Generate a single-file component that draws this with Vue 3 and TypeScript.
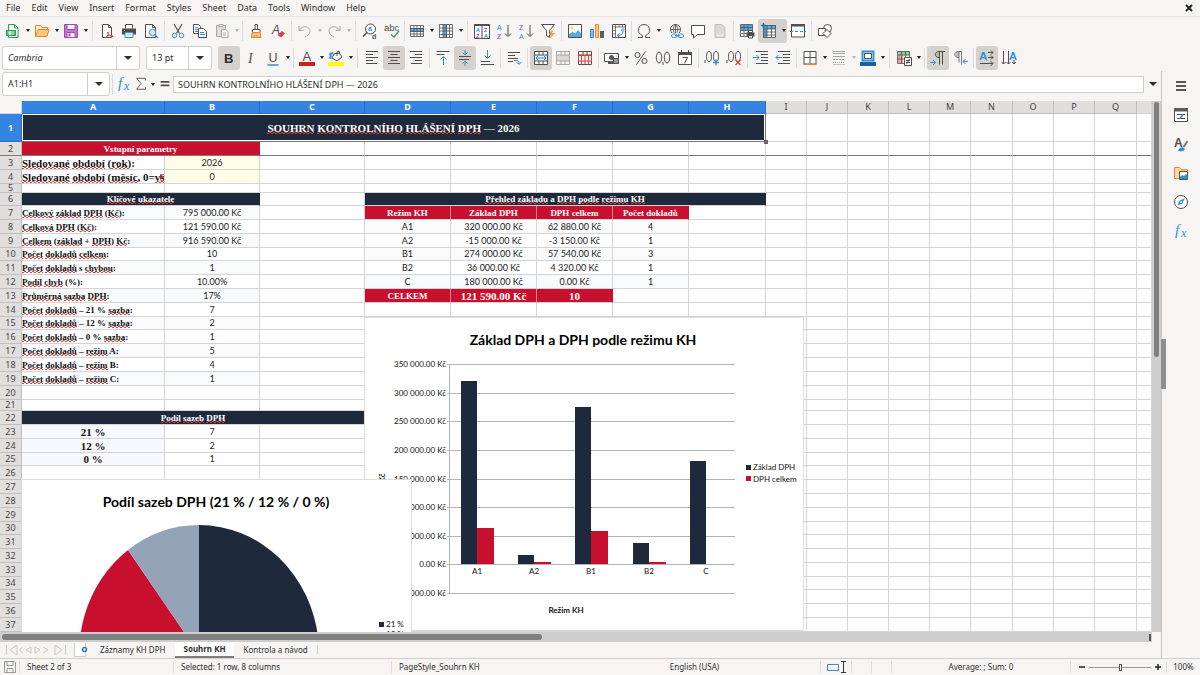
<script setup lang="ts">
import { ref } from 'vue'

interface ToolItem {
  icon?: string
  label?: string
  arrow?: boolean
  active?: boolean
  dim?: boolean
  sep?: 's3' | 's5' | 's7' | 'gap'
}

interface Cell {
  text?: string
  cls?: string
  span?: number
}

const menus = ['File', 'Edit', 'View', 'Insert', 'Format', 'Styles', 'Sheet', 'Data', 'Tools', 'Window', 'Help']

const G = '#4f4f4d'
const B = '#2f8fd8'
const O = '#e8862e'
const R = '#e23d3d'
const P = '#a646b8'
const L = '#a8a8a5'

const line = (d: string, c = G, w = 1) => `<path d="${d}" fill="none" stroke="${c}" stroke-width="${w}"/>`
const fill = (d: string, c = G) => `<path d="${d}" fill="${c}"/>`
const glyph = (t: string, x: number, y: number, s: number, c = G, extra = '') =>
  `<text x="${x}" y="${y}" font-size="${s}" fill="${c}" font-family="Liberation Sans, sans-serif" ${extra}>${t}</text>`
const grid = (c = G) => line('M1.5 2.5h13v11h-13zM1.5 5.5h13M1.5 8.5h13M1.5 11h13M5 2.5v11M8 2.5v11M11.5 2.5v11', c, 0.8)

const icons: Record<string, string> = {
  new: `<path d="M3.500 1.500h6l3.500 3.500v9.500h-9.500z" fill="#fff" stroke="#2f9e57"/>` + line('M9.500 1.500v3.500h3.500', '#2f9e57') + fill('M1 7h10v6h-10z', '#2f9e57') + line('M2.500 9h7M2.500 11h7M5 8v4', '#fff'),
  open: `<path d="M1.500 13.500v-11h5l1.500 2h5.500v2" fill="#fcebd0" stroke="${O}"/><path d="M1.500 13.500l2.500-7h11l-2 7z" fill="#fbc978" stroke="${O}"/>`,
  save: `<path d="M1.500 1.500h12l1 1v12h-13z" fill="#c07bd0" stroke="${P}"/><path d="M4 1.500h8v5h-8zM4 9.500h8v5h-8z" fill="#fff" stroke="${P}"/>` + fill('M5.500 10.500h2v3h-2z', P),
  pdf: `<path d="M3.500 1.500h6l3 3v10h-9z" fill="#fff" stroke="${G}"/>` + line('M9.500 1.500v3h3') + line('M7 15c2-2 3-6 2-6s0 4 5.500 4.500M7 14c2-2 5-2 7-1', R),
  print: `<path d="M4.500 5.500v-4h7v4" fill="#fff" stroke="${G}"/>` + fill('M1 5.500h14v6h-14z', '#4c4c4a') + `<path d="M4 9.500h8v5h-8z" fill="#fff" stroke="${B}"/>` + line('M5.500 11.500h5M3 7.500h1', '#9cc9ea'),
  preview: `<path d="M2.500 1.500h7l3 3v10h-10z" fill="#fff" stroke="${G}"/>` + line('M9.500 1.500v3h3') + `<circle cx="9.500" cy="9.500" r="3.200" fill="#d5eafa" stroke="${B}"/>` + line('M12 12l3 3', B, 1.500),
  cut: line('M4 1l5.500 9.500M12 1l-5.500 9.500', G, 1.200) + `<circle cx="4.500" cy="12.500" r="2.200" fill="none" stroke="${B}"/><circle cx="11.500" cy="12.500" r="2.200" fill="none" stroke="${B}"/>`,
  copy: `<path d="M1.500 1.500h5l2 2v7h-7z" fill="#fff" stroke="${G}"/><path d="M6.500 5.500h5l3 3v6h-8z" fill="#fff" stroke="${G}"/>` + line('M3 4.500h3M3 6.500h3M3 8.500h3M8 9.500h4M8 11.500h5', B),
  paste: `<path d="M2.500 2.500h9v11h-9z" fill="#dededb" stroke="${L}"/><path d="M5 1.500h4v2h-4z" fill="#fff" stroke="${L}"/><path d="M7.500 6.500h4l2.500 2v6h-6.500z" fill="#fff" stroke="${L}"/>` + line('M9 10h3M9 12h3', L),
  clone: line('M7 7v-5.500h2.500v5.500') + `<path d="M4.500 6.500h7.500v3h-7.500z" fill="#fff" stroke="${G}"/><path d="M4.500 9.500h7.500l1 5h-10z" fill="#fbc978" stroke="${O}"/>` + line('M6 14v-2M9 14v-2', O),
  clear: glyph('A', 2, 11, 12, G, 'font-style="italic"') + `<path d="M7.500 12l4.500-4 3 2.500-4 4z" fill="${R}"/>`,
  undo: line('M2 3v4.500h4.500M2.500 7c3-5 11-4 10.500 1.500c-.5 3-3 4.500-5 5.500', L),
  redo: line('M14 3v4.500h-4.500M13.500 7c-3-5-11-4-10.500 1.500c.5 3 3 4.500 5 5.500', L),
  find: `<circle cx="8.500" cy="6" r="5" fill="#fff" stroke="${G}"/>` + line('M5 9.500l-4 4', G, 1.600) + glyph('a', 6, 8, 7, B, 'font-weight="700"') + glyph('d', 10, 15.500, 7, G, 'font-weight="700"'),
  spell: glyph('abc', 0, 8, 9.500) + line('M7 11.500l3 2.500 5-6', '#2f9e57', 1.300),
  rows: `<path d="M1.500 2.500h13v11h-13z" fill="#fff"/>` + fill('M1 5h14v4h-14z', '#55a8e2') + grid(),
  cols: `<path d="M1.500 1.500h13v13h-13z" fill="#fff"/><path d="M5 1.500h4v13h-4z" fill="#55a8e2"/>` + line('M1.500 1.500h13v13h-13zM1.500 5h13M1.500 8h13M1.500 11.500h13M5 1.500v13M8.500 1.500v13M11.500 1.500v13', G, 0.8),
  sort: `<path d="M.5 1.500h15v14h-15zM8 1.500v14" fill="#fff" stroke="${G}"/>` + fill('M.5 1h15v2h-15z') + glyph('A', 2, 8.500, 5.500, B, 'font-weight="700"') + glyph('Z', 2, 14.800, 5.500, P, 'font-weight="700"') + glyph('Z', 10, 8.500, 5.500, P, 'font-weight="700"') + glyph('A', 10, 14.800, 5.500, B, 'font-weight="700"'),
  asc: glyph('A', 1, 7, 7, B) + glyph('Z', 1, 15.500, 7, P) + line('M12 2v11M9 10.500l3 3 3-3'),
  desc: glyph('Z', 1, 7, 7, P) + glyph('A', 1, 15.500, 7, B) + line('M12 2v11M9 10.500l3 3 3-3'),
  filter: `<path d="M1.500 1.500h13l-5 6v7l-3-2v-5z" fill="#fff" stroke="${G}"/>` + fill('M12 7l-3.500 5h2.500l-1.500 4 5.500-6h-3l1.500-3z', '#f39a3c'),
  image: `<path d="M1.500 1.500h13v13h-13z" fill="#fff" stroke="${G}"/><circle cx="5" cy="5" r="1.500" fill="#fbc978"/>` + fill('M2 14v-2.500l3.500-3 2.500 2 3-3.500 3 3.500v3.500z', '#55a8e2'),
  chart: `<path d="M1.500 6.500h3v8h-3z" fill="#7cc0f0" stroke="${B}"/><path d="M6.500 1.500h3v13h-3z" fill="#fbc978" stroke="${O}"/>` + fill('M11 8h4v7h-4z', '#5c5c5a'),
  pivot: `<path d="M1.500 1.500h13v13h-13z" fill="#fff" stroke="${G}"/>` + line('M1.500 4h13M4.500 1.500v13M8 1.500v2.500M11.500 1.500v2.500M1.500 7.500h3M1.500 11h3', '#777') + line('M6.500 12.500c4 0 6-2 5.500-6M10 8l2-2.500 2 2M8.500 10.500l-2.500 2 2.500 1.500', B),
  omega: line('M2 14.500h4.500v-2c-3.500-1.500-4.500-4-4-6.500c.5-3 3-4.500 5.500-4.500s5 1.500 5.500 4.500c.5 2.500-.5 5-4 6.500v2h4.500'),
  link: `<circle cx="7.500" cy="6.500" r="5" fill="none" stroke="${G}"/>` + line('M2.500 6.500h10M7.500 1.500v10M7.500 1.500c-3 3-3 7 0 10M7.500 1.500c3 3 3 7 0 10', G, 0.8) + `<path d="M4 10h11v5h-11z" fill="#f6f5f4"/><rect x="3.500" y="11" width="5.500" height="3.500" rx="1.700" fill="none" stroke="${B}"/><rect x="10" y="11" width="5.500" height="3.500" rx="1.700" fill="none" stroke="${B}"/>` + line('M7 12.700h5', B),
  comment: `<path d="M1.500 2.500h13v9h-7l-4 3.500v-3.500h-2z" fill="#fff" stroke="${G}"/>`,
  header: `<path d="M3 1.500h7l3 3v10h-10z" fill="#d9d9d6" stroke="#bcbcb9"/>` + line('M4.500 12.500h7', '#f3f3f0'),
  parea: `<path d="M1.500 1.500h12v12h-12z" fill="#fff"/>` + fill('M1.500 1.500h12v6h-12z', '#55a8e2') + line('M1.500 1.500h12v12h-12zM1.500 4.500h12M1.500 7.500h12M1.500 10.500h12M5 1.500v12M9 1.500v12', G, 0.8) + `<path d="M7.500 9.500h8v4h-8z" fill="#4c4c4a"/><path d="M9.500 7.500h4v2h-4zM9.500 12.500h4v2.500h-4z" fill="#fff" stroke="${G}"/>`,
  freeze: `<path d="M2.500 2.500h12v12h-12z" fill="#fff"/>` + fill('M2 2h13v4h-13zM2 2h4v13h-4z', '#55a8e2') + line('M2.500 2.500h12v12h-12zM2.500 6h12M2.500 9h12M2.500 12h12M6 2.500v12M10.500 2.500v12', G, 0.8) + line('M0 2.500h5M2.500 0v5', '#0f6fb8', 1.400),
  split: `<path d="M1.500 2.500h13v11.500h-13z" fill="#fff" stroke="${G}"/>` + fill('M1 1h14v2.500h-14z') + line('M0 8.500h3M5 8.500h3M10 8.500h3M15 8.500h1', B),
  shapes: `<circle cx="10.500" cy="5.500" r="4" fill="#fff" stroke="${G}"/><path d="M1.500 5.500h7v7h-7z" fill="#fff" stroke="${G}"/><path d="M10 6.500l4 4-4 4-4-4z" fill="#fff" stroke="${G}"/>`,
  bold: glyph('B', 3, 13, 13, '#2e2e2c', 'font-weight="700"'),
  italic: `<text x="5" y="13" font-size="14" font-style="italic" fill="${G}" font-family="Liberation Serif, serif">I</text>`,
  underline: glyph('U', 3.500, 12, 12.500) + line('M2.500 15h11', B, 1.500),
  fcolor: glyph('A', 3.500, 11, 13) + fill('M0 12h16v4h-16z', '#c9211e'),
  hilite: `<path d="M6 4l5-1 3 4-5 4-5-3z" fill="#fff" stroke="${G}"/>` + line('M2.500 9v-5.500h3', B, 2) + line('M9 6v-4l2-1 1 3') + fill('M0 12h16v4h-16z', '#ffff00'),
  left: line('M2 1.500h12M2 4.500h7M2 7.500h12M2 10.500h7M2 13.500h11'),
  center: line('M2 1.500h12M4.500 4.500h7M2 7.500h12M4.500 10.500h7M2 13.500h12'),
  right: line('M2 1.500h12M7 4.500h7M2 7.500h12M7 10.500h7M3 13.500h11'),
  vtop: line('M1.500 1.500h13M1.500 4.500h8') + line('M8.500 15v-8M5.500 9.500l3-3 3 3', B),
  vmid: line('M2 6.500h12M2 9.500h10') + line('M8 0v4.500M5.500 2.500l2.500 2.500 2.500-2.500M8 16v-4.500M5.500 13.500l2.500-2.500 2.500 2.500', B),
  vbot: line('M2 11.500h9M2 14.500h13') + line('M8.500 0v8M5.500 5.500l3 3 3-3', B),
  wrap: line('M2 2.500h12M2 5.500h7M2 8.500h10M2 11.500h5') + line('M8 10.500h3c1.500 0 2 1 2 3.500M10.500 12l2.500 2.500 2.500-2.500', B),
  merge: `<path d="M1.500 1.500h13v13h-13z" fill="#fff"/><path d="M1.500 5.500h13v5h-13z" fill="#e6f3fc"/>` + line('M1.500 1.500h13v13h-13zM1.500 5h13M1.500 11h13M6 1.500v3.500M10 1.500v3.500M6 11v3.500M10 11v3.500') + line('M3 8h10M5 6l-2 2 2 2M11 6l2 2-2 2', B),
  center2: fill('M2 5h12v6h-12z', '#d9d9d6') + line('M1.500 1.500h13v13h-13zM1.500 5h13M1.500 11h13M6 1.500v3.500M10 1.500v3.500M6 11v3.500M10 11v3.500', L),
  unmerge: line('M1.500 1.500h13v13h-13zM1.500 5h13M6 1.500v3.500M10 1.500v3.500') + line('M1.500 5.500h13v5.500h-13zM4.500 5.500v9M8 5.500v9M11.500 5.500v9', R),
  money: `<path d="M.5 3.500h14v8h-14z" fill="#fff" stroke="${G}"/><circle cx="7.500" cy="7.500" r="2.500" fill="#555"/>` + fill('M9 8h6v6h-6zM4 11h5v3h-5z', '#555') + line('M10 10h4M10 12h4', '#ddd'),
  percent: `<circle cx="4.500" cy="5" r="2.500" fill="none" stroke="${G}"/><circle cx="11.500" cy="11" r="2.500" fill="none" stroke="${G}"/>` + line('M12.500 1.500l-9 13'),
  number: `<ellipse cx="4" cy="7.500" rx="2.700" ry="5.500" fill="none" stroke="${G}"/><ellipse cx="12" cy="7.500" rx="2.700" ry="5.500" fill="none" stroke="${G}"/>` + line('M8 12v3'),
  date: `<path d="M1.500 2.500h13v12h-13z" fill="#fff" stroke="${G}"/>` + fill('M1 2h14v3h-14z') + line('M4.500 0v4M11.500 0v4') + line('M5.500 7.500h5l-3 6'),
  adddec: `<ellipse cx="5" cy="6.500" rx="2.500" ry="5" fill="none" stroke="${G}"/><ellipse cx="12" cy="6.500" rx="2.500" ry="5" fill="none" stroke="${G}"/>` + line('M1 10v3') + line('M9 12.500h6M12 9.500v6', B, 1.300),
  deldec: `<ellipse cx="5" cy="6.500" rx="2.500" ry="5" fill="none" stroke="${G}"/><ellipse cx="12" cy="6.500" rx="2.500" ry="5" fill="none" stroke="${G}"/>` + line('M1 10v3') + line('M9.500 10l5 5M14.500 10l-5 5', R, 1.200),
  indent: line('M3 1.500h12M8 4.500h7M8 7.500h7M8 10.500h7M3 13.500h12') + line('M0 7.500h6M3.500 5l2.500 2.500-2.500 2.500', B),
  outdent: line('M3 1.500h12M8 4.500h7M8 7.500h7M8 10.500h7M3 13.500h12') + line('M1 7.500h6M3.500 5l-2.500 2.500 2.500 2.500', B),
  borders: `<path d="M2 1.500h12v12.500h-12z" fill="#fff" stroke="${G}"/>` + line('M8 1.500v12M2 7.500h12') + line('M1.500 14.500h13', O),
  bstyle: line('M2 1.500h12M2 3.500h12', L) + line('M2 6.500h12', L) + `<path d="M2 9.500h12" stroke="${L}" stroke-dasharray="2 1"/><path d="M2 12.500h12" stroke="${L}" stroke-dasharray="1 1"/>` + line('M2 14.500h12', '#c6c6c3'),
  bcolor: `<path d="M2.500 1.500h11v9h-11z" fill="#fff" stroke="${B}" stroke-width="2"/>` + line('M4.500 3.500h7v5h-7z') + fill('M0 12h16v4h-16z', '#1f5f9e'),
  cond: fill('M2 1h12v4h-12z', '#8fd19e') + fill('M2 5h5v8h-5z', '#f3a09d') + line('M1.500 1.500h12v12h-12zM1.500 5h12M1.500 9h12M5.500 1.500v12M9.500 1.500v12', G, 0.8) + `<path d="M8.500 7.500h7v8h-7z" fill="#fff" stroke="${G}"/>` + line('M10 10.500h4M10 12.500h4M13.500 9l-3 5'),
  ltr: fill('M9 1c-5 0-5 7 0 7z', '#bdbab6') + line('M15 1.500h-6c-5 0-5 6 0 6M9.500 1.500v13M12.500 1.500v13') + line('M0 12.500h5.500M3 10l2.500 2.500-2.500 2.500', B),
  rtl: fill('M7 1c-5 0-5 7 0 7z', '#bdbab6') + line('M9.500 1.500h-3c-5 0-5 6 0 6M7 1.500v11M9.500 1.500v13', '#777') + line('M16 11.500h-5M13.500 9l-2.500 2.500 2.500 2.500', B),
  dirh: glyph('A', 0, 10, 11.500, B, 'font-weight="700"') + line('M9 2.500h5M12 .5l2 2-2 2M9 7.500h5M12 5.500l2 2-2 2M1 13.500h13M11.500 11l2.500 2.500-2.500 2.500'),
  dirv: glyph('A', 8, 10, 11, B, 'font-weight="700"') + line('M2.500 1v13M.5 12l2 2 2-2M7.500 1v13M5.500 12l2 2 2-2M13 10v4M11 12l2 2 2-2'),
  fx: `<text x="2" y="12" font-size="15" font-style="italic" fill="${B}" font-family="Liberation Serif, serif">f</text><text x="8" y="14" font-size="12" font-style="italic" fill="${B}" font-family="Liberation Serif, serif">x</text>`,
  sum: line('M13 4v-2.500h-10l5 6-5 6.500h10v-2.500'),
  equals: line('M3 5.500h10M3 9.500h10', G, 2),
  menu: line('M3 4h10M3 8h10M3 12h10', '#222', 1.500),
  props: `<path d="M1.500 1.500h13v13h-13z" fill="#fff" stroke="${G}"/>` + fill('M1 1h14v3.500h-14z', '#5c5c5a') + line('M4 7.500h8M4 11.500h8') + line('M7 11.500l3-4', B, 1.500),
  styles: glyph('A', 1, 11, 12, G, 'font-weight="700"') + line('M14.500 5l-4 6', '#777', 2) + fill('M5 15c1-3 4-5 6-3s-1 4-6 3z', B),
  gallery: `<path d="M1.500 13.500v-11h5l1.500 2h6.500v9z" fill="#fbd9a6" stroke="${O}"/><path d="M6.500 6.500h8v8h-8z" fill="#fff" stroke="${G}"/>` + fill('M7 14v-2l2-2 2 1 2-2 1.500 2v3z', B),
  navigator: `<circle cx="8" cy="8" r="6.500" fill="#fff" stroke="${G}"/>` + fill('M11.500 4.500l-2 5-5 2 2-5z', B) + `<circle cx="8" cy="8" r="1" fill="#fff"/>`,
}

const s = (sep: ToolItem['sep']): ToolItem => ({ sep })
const i = (icon: string, label: string, arrow = false, active = false, dim = false): ToolItem => ({ icon, label, arrow, active, dim })

const standardBar: ToolItem[] = [
  i('new', 'New', true), i('open', 'Open', true), i('save', 'Save', true), s('s7'),
  i('pdf', 'Export as PDF'), i('print', 'Print'), i('preview', 'Print Preview'), s('s5'),
  i('cut', 'Cut'), i('copy', 'Copy'), i('paste', 'Paste', true, false, true), s('s5'),
  i('clone', 'Clone Formatting'), i('clear', 'Clear Formatting'), s('s5'),
  i('undo', 'Undo', true, false, true), i('redo', 'Redo', true, false, true), s('s7'),
  i('find', 'Find and Replace'), i('spell', 'Spelling'), s('s3'),
  i('rows', 'Row', true), i('cols', 'Column', true), s('s7'),
  i('sort', 'Sort'), i('asc', 'Sort Ascending'), i('desc', 'Sort Descending'), i('filter', 'AutoFilter'), s('s5'),
  i('image', 'Insert Image'), i('chart', 'Insert Chart'), i('pivot', 'Pivot Table'), s('s3'),
  i('omega', 'Special Character', true), s('gap'), i('link', 'Hyperlink'), i('comment', 'Comment'), i('header', 'Headers and Footers'), s('s5'),
  i('parea', 'Define Print Area'), i('freeze', 'Freeze Rows and Columns', true, true), i('split', 'Split Window'), s('s5'),
  i('shapes', 'Draw Functions'),
]

const formatBar: ToolItem[] = [
  i('bold', 'Bold', false, true), i('italic', 'Italic'), i('underline', 'Underline', true), s('s5'),
  i('fcolor', 'Font Color', true), i('hilite', 'Background Color', true), s('s7'),
  i('left', 'Align Left'), i('center', 'Center', false, true), i('right', 'Align Right'), s('s5'),
  i('vtop', 'Align Top'), i('vmid', 'Center Vertically', false, true), i('vbot', 'Align Bottom'), s('s5'),
  i('wrap', 'Wrap Text'), s('s5'),
  i('merge', 'Merge and Center', false, true), i('center2', 'Merge Cells'), i('unmerge', 'Unmerge Cells'), s('s5'),
  i('money', 'Currency', true), i('percent', 'Percent'), i('number', 'Number'), i('date', 'Date'), s('s5'),
  i('adddec', 'Add Decimal Place'), i('deldec', 'Delete Decimal Place'), s('s5'),
  i('indent', 'Increase Indent'), i('outdent', 'Decrease Indent'), s('s5'),
  i('borders', 'Borders', true), i('bstyle', 'Border Style', true, false, true), i('bcolor', 'Border Color', true), s('s7'),
  i('cond', 'Conditional', true), s('s5'),
  i('ltr', 'Left-To-Right', false, true), i('rtl', 'Right-To-Left'), s('s5'),
  i('dirh', 'Text direction left to right', false, true), i('dirv', 'Text direction top to bottom'),
]

const sideBar = [
  i('menu', 'Sidebar Settings'), i('props', 'Properties'), i('styles', 'Styles'),
  i('gallery', 'Gallery'), i('navigator', 'Navigator'), i('fx', 'Functions'),
]

const letters = 'ABCDEFGHIJKLMNOPQ'.split('')
const colWidths = [143, 95, 105, 86, 86, 76, 76, 77, 41, 41, 41, 41, 41, 42, 41, 41, 42]
const rowHeights = [
  28, 14, 14, 14, 9, 13, 14, 14, 14, 13, 14, 14, 14, 14, 13, 14, 14, 14, 14,
  14, 11, 14, 14, 14, 13, 14, 14, 14, 14, 13, 14, 14, 14, 13, 14, 14, 14, 14,
]

const indicators: [string, string][] = [
  ['Celkový základ DPH (Kč):', '795 000.00 Kč'],
  ['Celková DPH (Kč):', '121 590.00 Kč'],
  ['Celkem (základ + DPH) Kč:', '916 590.00 Kč'],
  ['Počet dokladů celkem:', '10'],
  ['Počet dokladů s chybou:', '1'],
  ['Podíl chyb (%):', '10.00%'],
  ['Průměrná sazba DPH:', '17%'],
  ['Počet dokladů – 21 % sazba:', '7'],
  ['Počet dokladů – 12 % sazba:', '2'],
  ['Počet dokladů – 0 % sazba:', '1'],
  ['Počet dokladů – režim A:', '5'],
  ['Počet dokladů – režim B:', '4'],
  ['Počet dokladů – režim C:', '1'],
]
const regimes = [
  ['A1', '320 000.00 Kč', '62 880.00 Kč', '4'],
  ['A2', '-15 000.00 Kč', '-3 150.00 Kč', '1'],
  ['B1', '274 000.00 Kč', '57 540.00 Kč', '3'],
  ['B2', '36 000.00 Kč', '4 320.00 Kč', '1'],
  ['C', '180 000.00 Kč', '0.00 Kč', '1'],
]

const content: Record<string, Cell> = {
  A1: { text: 'SOUHRN KONTROLNÍHO HLÁŠENÍ DPH — 2026', cls: 'title', span: 8 },
  A2: { text: 'Vstupní parametry', cls: 'band red', span: 2 },
  A3: { text: 'Sledované období (rok):', cls: 'label wide' },
  B3: { text: '2026', cls: 'value entry' },
  A4: { text: 'Sledované období (měsíc, 0=vše):', cls: 'label wide' },
  B4: { text: '0', cls: 'value entry' },
  A6: { text: 'Klíčové ukazatele', cls: 'band navy', span: 2 },
  D6: { text: 'Přehled základu a DPH podle režimu KH', cls: 'band navy', span: 5 },
  D7: { text: 'Režim KH', cls: 'band red divided' },
  E7: { text: 'Základ DPH', cls: 'band red divided' },
  F7: { text: 'DPH celkem', cls: 'band red divided' },
  G7: { text: 'Počet dokladů', cls: 'band red' },
  D13: { text: 'CELKEM', cls: 'band red divided' },
  E13: { text: '121 590.00 Kč', cls: 'band red divided total' },
  F13: { text: '10', cls: 'band red total' },
  A22: { text: 'Podíl sazeb DPH', cls: 'band navy', span: 3 },
  A23: { text: '21 %', cls: 'rate' },
  B23: { text: '7', cls: 'value' },
  A24: { text: '12 %', cls: 'rate' },
  B24: { text: '2', cls: 'value' },
  A25: { text: '0 %', cls: 'rate' },
  B25: { text: '1', cls: 'value' },
}
indicators.forEach(([name, value], n) => {
  const tint = n % 2 === 0 ? ' tint' : ''
  content[`A${n + 7}`] = { text: name, cls: 'label' + tint }
  content[`B${n + 7}`] = { text: value, cls: 'value' + tint }
})
regimes.forEach((row, n) => {
  row.forEach((text, c) => {
    content[`${'DEFG'[c]}${n + 8}`] = { text, cls: 'value' + (n % 2 === 0 ? ' tint' : '') }
  })
})

const rows = rowHeights.map((height, r) => {
  const cells: Cell[] = []
  for (let c = 0; c < letters.length; ) {
    const cell = content[`${letters[c]}${r + 1}`] ?? {}
    cells.push(cell)
    c += cell.span ?? 1
  }
  return { height, cells }
})

/* Splits a text into words, marking those the spell checker flags. */
const words = (cell: Cell) =>
  (cell.text ?? '').split(/(\p{L}{2,})/u).filter(Boolean).map((part) => ({
    part,
    flagged: /^\p{L}{2,}$/u.test(part) && !/value|total/.test(cell.cls ?? ''),
  }))

const axis = [350, 300, 250, 200, 150, 100, 50, 0, -50].map((v, n) => ({
  label: v === 0 ? '0.00 Kč' : `${v} 000.00 Kč`,
  y: 46 + Math.round((n * 229) / 8),
}))
const zeroY = 246
const bars = [
  { name: 'A1', base: 320000, tax: 62880 },
  { name: 'A2', base: 15000, tax: 3150 },
  { name: 'B1', base: 274000, tax: 57540 },
  { name: 'B2', base: 36000, tax: 4320 },
  { name: 'C', base: 180000, tax: 0 },
].map((b, n) => ({
  name: b.name,
  x: 96 + Math.round(n * 57.2),
  hBase: Math.round((b.base * 200) / 350000),
  hTax: Math.round((b.tax * 200) / 350000),
}))

const sheets = ['Záznamy KH DPH', 'Souhrn KH', 'Kontrola a návod']
const activeSheet = ref('Souhrn KH')
const fontName = ref('Cambria')
const fontSize = ref('13 pt')
const nameBox = ref('A1:H1')
const formula = ref('SOUHRN KONTROLNÍHO HLÁŠENÍ DPH — 2026')
const zoom = ref(50)
</script>

<template>
  <div class="app">
    <nav class="menubar">
      <button v-for="m in menus" :key="m" type="button">{{ m }}</button>
      <button class="close" type="button" aria-label="Close document">
        <svg width="8" height="8" viewBox="0 0 8 8"><path d="M1 1l6 6M7 1l-6 6" stroke="#222" stroke-width="2" /></svg>
      </button>
    </nav>

    <div class="toolbar">
      <template v-for="(t, n) in standardBar" :key="n">
        <i v-if="t.sep" class="sep" :class="t.sep"></i>
        <button v-else type="button" class="tool" :class="{ split: t.arrow, active: t.active, dim: t.dim }" :aria-label="t.label">
          <svg width="16" height="16" viewBox="0 0 16 16" v-html="icons[t.icon!]"></svg>
          <span v-if="t.arrow" class="arrow"></span>
        </button>
      </template>
    </div>

    <div class="toolbar">
      <label class="combo font">
        <select v-model="fontName" aria-label="Font Name"><option>Cambria</option><option>Calibri</option></select>
        <span class="drop"><b class="arrow big"></b></span>
      </label>
      <label class="combo size">
        <select v-model="fontSize" aria-label="Font Size"><option>13 pt</option><option>11 pt</option></select>
        <span class="drop"><b class="arrow big"></b></span>
      </label>
      <template v-for="(t, n) in formatBar" :key="n">
        <i v-if="t.sep" class="sep" :class="t.sep"></i>
        <button v-else type="button" class="tool" :class="{ split: t.arrow, active: t.active, dim: t.dim }" :aria-label="t.label">
          <svg width="16" height="16" viewBox="0 0 16 16" v-html="icons[t.icon!]"></svg>
          <span v-if="t.arrow" class="arrow"></span>
        </button>
      </template>
    </div>

    <div class="body">
      <main class="work">
        <div class="formula-bar">
          <div class="combo name">
            <input v-model="nameBox" type="text" aria-label="Name Box" />
            <button type="button" class="drop" aria-label="Named ranges"><b class="arrow big"></b></button>
          </div>
          <i class="sep s5"></i>
          <button type="button" class="mini" aria-label="Function Wizard"><svg width="16" height="16" viewBox="0 0 16 16" v-html="icons.fx"></svg></button>
          <button type="button" class="mini" aria-label="Select Function"><svg width="14" height="14" viewBox="0 0 16 16" v-html="icons.sum"></svg></button>
          <button type="button" class="mini small" aria-label="Function list"><b class="arrow"></b></button>
          <button type="button" class="mini" aria-label="Formula"><svg width="14" height="14" viewBox="0 0 16 16" v-html="icons.equals"></svg></button>
          <input v-model="formula" class="formula" type="text" aria-label="Input line" />
          <button type="button" class="expand" aria-label="Expand Formula Bar"><b class="arrow big"></b></button>
        </div>

        <div class="sheet-area">
          <div class="sheet">
            <table>
              <colgroup>
                <col class="rowhead" />
                <col v-for="(w, n) in colWidths" :key="n" :style="{ width: w + 'px' }" />
                <col />
              </colgroup>
              <thead>
                <tr>
                  <td class="corner"></td>
                  <th v-for="(l, n) in letters" :key="l" scope="col" :class="{ sel: n < 8 }">{{ l }}</th>
                  <td class="rest"></td>
                </tr>
              </thead>
              <tbody>
                <tr v-for="(row, r) in rows" :key="r" :class="{ frozen: r === 1 }" :style="{ height: row.height + 'px' }">
                  <th scope="row" :class="{ sel: r === 0 }">{{ r + 1 }}</th>
                  <td v-for="(cell, c) in row.cells" :key="c" :colspan="cell.span" :class="cell.cls">
                    <span v-for="(w, k) in words(cell)" :key="k" :class="{ flagged: w.flagged }">{{ w.part }}</span>
                  </td>
                  <td></td>
                </tr>
              </tbody>
            </table>
            <i class="handle"></i>
            <i class="overflow-mark"></i>

            <figure class="chart bar-chart" aria-label="Základ DPH a DPH podle režimu KH">
              <svg width="438" height="312" viewBox="0 0 438 312">
                <text class="chart-title" x="218" y="27" text-anchor="middle">Základ DPH a DPH podle režimu KH</text>
                <g v-for="a in axis" :key="a.label">
                  <path :d="`M82 ${a.y}.500h288`" stroke="#b3b3b3" />
                  <text class="tiny" x="81" :y="a.y + 3" text-anchor="end">{{ a.label }}</text>
                </g>
                <path d="M84.500 46v230" stroke="#b3b3b3" />
                <g v-for="b in bars" :key="b.name">
                  <rect :x="b.x" :y="zeroY - b.hBase" width="16" :height="b.hBase" fill="#1f293c" />
                  <rect :x="b.x + 16" :y="zeroY - b.hTax" width="17" :height="b.hTax" fill="#c8102e" />
                  <text class="tiny" :x="b.x + 16" y="256" text-anchor="middle">{{ b.name }}</text>
                </g>
                <text class="tiny strong" x="201" y="295" text-anchor="middle">Režim KH</text>
                <text class="tiny strong" x="20" y="160" text-anchor="middle" transform="rotate(-90 20 160)">Kč</text>
                <path d="M381 147h5v5h-5z" fill="#1f293c" />
                <path d="M381 158h5v5h-5z" fill="#c8102e" />
                <text class="tiny" x="388" y="152">Základ DPH</text>
                <text class="tiny" x="388" y="164">DPH celkem</text>
              </svg>
            </figure>

            <figure class="chart pie-chart" aria-label="Podíl sazeb DPH">
              <svg width="389" height="300" viewBox="0 0 389 300">
                <text class="chart-title" x="194" y="27" text-anchor="middle">Podíl sazeb DPH (21 % / 12 % / 0 %)</text>
                <path d="M177 174V45A120 129 0 1 1 63 214z" fill="#1f293c" />
                <path d="M177 174L63 214A120 129 0 0 1 106 70z" fill="#c8102e" />
                <path d="M177 174L106 70A120 129 0 0 1 177 45z" fill="#94a3b8" />
                <path d="M357 142h5v5h-5z" fill="#1f293c" />
                <path d="M357 154h5v5h-5z" fill="#c8102e" />
                <text class="tiny" x="364" y="147">21 %</text>
                <text class="tiny" x="364" y="157">12 %</text>
              </svg>
            </figure>
          </div>
          <div class="vscroll"><i></i></div>
        </div>
        <div class="hscroll"><i></i><b></b></div>

        <div class="tabs">
          <button type="button" class="navs" aria-label="Sheet navigation">
            <svg width="60" height="12" viewBox="0 0 60 12" fill="none" stroke="#c9c9c6">
              <path d="M.5 1v10M11 1L4 6l7 5zM25 3l-5 3 5 3zM16.500 3l-3 3 3 3M29 3l5 3-5 3zM37 3l5 3-5 3M49 1l7 5-7 5zM59.500 1v10" />
            </svg>
          </button>
          <button type="button" class="add" aria-label="Add Sheet">
            <svg width="16" height="14" viewBox="0 0 16 14"><path d="M.5 0v13.500h11V0" fill="#fff" stroke="#ccc" /><circle cx="10.500" cy="6.500" r="2" fill="#fff" stroke="#2a6fb5" stroke-width="1.500" /></svg>
          </button>
          <button v-for="t in sheets" :key="t" type="button" class="tab" :class="{ current: t === activeSheet }" @click="activeSheet = t">{{ t }}</button>
        </div>
      </main>

      <aside class="sidebar">
        <i class="grip"></i>
        <button v-for="t in sideBar" :key="t.icon" type="button" :aria-label="t.label">
          <svg width="16" height="16" viewBox="0 0 16 16" v-html="icons[t.icon!]"></svg>
        </button>
      </aside>
    </div>

    <footer class="status">
      <div class="field mid"><svg width="12" height="12" viewBox="0 0 12 12" fill="none" stroke="#999"><path d="M.5.5h10l1 1v10h-11zM3 .5v4h6v-4M3 11.500v-4h6v4" /></svg></div>
      <div class="field">Sheet 2 of 3</div>
      <div class="field">Selected: 1 row, 8 columns</div>
      <div class="field plain">PageStyle_Souhrn KH</div>
      <div class="field mid">English (USA)</div>
      <div class="field mid">
        <svg width="20" height="12" viewBox="0 0 20 12" fill="none"><path d="M1.500 3.500h11v6h-11z" stroke="#2f8fd8" /><path d="M17.500 1v10M15 .5h5M15 11.500h5" stroke="#333" /></svg>
      </div>
      <div class="field"></div>
      <div class="field"></div>
      <div class="field mid">Average: ; Sum: 0</div>
      <div class="field zoomer">
        <button type="button" aria-label="Zoom Out"><svg width="8" height="8" viewBox="0 0 8 8"><path d="M1 4h6" stroke="#222" stroke-width="1.500" /></svg></button>
        <input v-model="zoom" type="range" min="0" max="100" aria-label="Zoom" />
        <button type="button" aria-label="Zoom In"><svg width="8" height="8" viewBox="0 0 8 8"><path d="M1 4h6M4 1v6" stroke="#222" stroke-width="1.500" /></svg></button>
      </div>
      <div class="field mid plain">100%</div>
    </footer>
  </div>
</template>

<style>
body {
  margin: 0;
  overflow: hidden;
}
</style>

<style scoped>
.app {
  height: 100vh;
  display: flex;
  flex-direction: column;
  background: #f6f5f4;
  color: #2e2e2c;
  font: 9px/12px 'Noto Sans', sans-serif;
}
button,
input,
select {
  margin: 0;
  padding: 0;
  border: 0;
  background: none;
  color: inherit;
  font: inherit;
  outline: none;
}
svg {
  display: block;
  overflow: visible;
}
.menubar {
  flex: none;
  height: 16px;
  display: flex;
  align-items: center;
  gap: 11px;
  padding: 0 7px 0 6px;
  border-bottom: 1px solid #e6e5e3;
}
.close {
  margin-left: auto;
}
.toolbar {
  flex: none;
  height: 27px;
  display: flex;
  align-items: center;
  padding-left: 2px;
}
.tool {
  flex: none;
  width: 22px;
  height: 24px;
  padding-left: 3px;
  display: flex;
  align-items: center;
  border-radius: 3px;
}
.tool.split {
  width: 29px;
}
.tool.active {
  background: #d5d2ce;
}
.arrow {
  flex: none;
  width: 0;
  height: 0;
  margin-left: 5px;
  border: 2px solid transparent;
  border-top: 3px solid #222;
  border-bottom: 0;
}
.dim .arrow {
  border-top-color: #b5b5b2;
}
.arrow.big {
  margin-left: 0;
  border-width: 4px 4px 0;
  border-top-color: #2e2e2c;
}
.sep {
  flex: none;
  height: 20px;
  width: 5px;
  background: linear-gradient(#dddcda, #dddcda) center / 1px 100% no-repeat;
}
.sep.s3,
.sep.gap {
  width: 3px;
}
.sep.s7 {
  width: 7px;
}
.sep.gap {
  background: none;
}
.combo {
  position: relative;
  flex: none;
  display: flex;
  box-sizing: border-box;
  height: 24px;
  border: 1px solid #d2cfcb;
  border-radius: 3px;
  background: #fff;
}
.combo select {
  appearance: none;
  width: 100%;
  padding-left: 6px;
  font-size: 10px;
}
.combo input {
  flex: 1;
  min-width: 0;
  padding-left: 5px;
}
.drop {
  flex: none;
  width: 22px;
  display: flex;
  align-items: center;
  justify-content: center;
  border-left: 1px solid #d2cfcb;
}
.font {
  width: 138px;
  margin-right: 6px;
}
.font select {
  padding-left: 5px;
  font-size: 9px;
  font-style: italic;
}
.size {
  width: 66px;
  margin-right: 6px;
}
.size select {
  padding-left: 5px;
  font-size: 9px;
}
.body {
  flex: 1;
  min-height: 0;
  display: flex;
}
.work {
  flex: 1;
  min-width: 0;
  display: flex;
  flex-direction: column;
}
.formula-bar {
  flex: none;
  height: 30px;
  box-sizing: border-box;
  display: flex;
  align-items: center;
  padding: 0 0 4px 2px;
}
.name {
  width: 108px;
}
.mini {
  flex: none;
  width: 17px;
  display: flex;
  justify-content: center;
}
.mini.small {
  width: 7px;
}
.mini .arrow {
  margin: 0;
}
.formula {
  flex: 1;
  min-width: 0;
  box-sizing: border-box;
  height: 17px;
  padding-left: 4px;
  border: 1px solid #d2cfcb;
  background: #fff;
}
.expand {
  width: 17px;
  display: flex;
  justify-content: center;
}
.sheet-area {
  flex: 1;
  min-height: 0;
  display: flex;
}
.sheet {
  position: relative;
  flex: 1;
  min-width: 0;
  overflow: hidden;
  background: #fff;
}
table {
  width: 100%;
  table-layout: fixed;
  border-collapse: separate;
  border-spacing: 0;
  line-height: 8px;
}
.rowhead {
  width: 22px;
}
td,
th {
  box-sizing: border-box;
  padding: 0;
  border-right: 1px solid #d4d4d4;
  border-bottom: 1px solid #d4d4d4;
  overflow: hidden;
  white-space: nowrap;
  text-align: center;
  vertical-align: middle;
}
th {
  background: #e0dfde;
  border-color: #bfbfbf;
  color: #444;
  font-weight: 400;
}
thead tr {
  height: 13px;
}
thead .corner {
  background: #f6f5f4;
}
thead .rest {
  background: #e0dfde;
}
th.sel {
  background: #3584e4;
  border-color: #2a6fc4;
  color: #fff;
  font-weight: 700;
}
.frozen td,
.frozen th {
  border-bottom-color: #7a7a7a;
}
.title,
.band,
.label,
.rate {
  font-family: 'Liberation Serif', serif;
  font-weight: 700;
}
.title {
  border-right: 1px solid #777;
  border-bottom: 1px solid #777;
  box-shadow: inset 0 0 0 1px #fff;
  background: #1f293c;
  color: #fff;
  font-size: 11px;
}
.band {
  color: #fff;
  font-size: 9px;
}
.navy {
  background: #1f293c;
  border-right-color: #1f293c;
}
.red {
  background: #c8102e;
  border-right-color: #c8102e;
}
.divided {
  border-right-color: #e08a98;
}
.total {
  font-size: 11px;
}
.label {
  text-align: left;
  color: #111;
  font-size: 9px;
}
.label.wide {
  font-size: 11px;
}
.rate {
  background: #f8f9fd;
  color: #111;
  font-size: 11px;
}
.value {
  color: #222;
  font-family: Lato, sans-serif;
  font-size: 9px;
}
.entry {
  background: #fffde7;
}
.tint {
  background: #f8fafc;
}
.flagged {
  background:
    linear-gradient(90deg, #e2403a 50%, transparent 0) 0 100% / 4px 1px repeat-x,
    linear-gradient(90deg, #e2403a 50%, transparent 0) 2px calc(100% - 1px) / 4px 1px repeat-x;
}
.red .flagged {
  background: none;
}
.handle {
  position: absolute;
  left: 764px;
  top: 39px;
  width: 4px;
  height: 4px;
  background: #666;
}
.overflow-mark {
  position: absolute;
  left: 160px;
  top: 73px;
  border: 3px solid transparent;
  border-left: 4px solid #b3262b;
  border-right: 0;
}
.chart {
  position: absolute;
  margin: 0;
  background: #fff;
  outline: 1px solid #dcdcdc;
}
.bar-chart {
  left: 365px;
  top: 217px;
}
.pie-chart {
  left: 22px;
  top: 379px;
}
.chart-title {
  font: 700 14px Lato, sans-serif;
  fill: #000;
}
.tiny {
  font: 8px Lato, sans-serif;
  fill: #111;
}
.tiny.strong {
  font-weight: 700;
}
.vscroll {
  flex: none;
  width: 9px;
  background: #cdcdcd;
}
.vscroll i {
  display: block;
  width: 5px;
  height: 48%;
  margin: 1px 0 0 2px;
  border-radius: 3px;
  background: #7f7f7f;
}
.hscroll {
  flex: none;
  display: flex;
  align-items: center;
  justify-content: space-between;
  height: 10px;
  margin-right: 9px;
  padding: 0 1px 0 2px;
  background: #cdcdcd;
}
.hscroll i {
  width: 47%;
  height: 6px;
  border-radius: 3px;
  background: #7f7f7f;
}
.hscroll b {
  width: 2px;
  height: 7px;
  background: #555;
}
.tabs {
  flex: none;
  height: 16px;
  display: flex;
  padding-left: 6px;
  font-size: 8px;
}
.navs,
.add {
  display: flex;
  align-items: center;
}
.navs {
  width: 68px;
}
.add {
  width: 16px;
}
.tab {
  padding: 0 10px;
}
.tab:last-child {
  background: linear-gradient(#d2cfcb, #d2cfcb) right / 1px 60% no-repeat;
}
.tab.current {
  padding: 0 8px;
  border-bottom: 2px solid #7f7f7f;
  background: #fff;
  font-weight: 700;
}
.sidebar {
  position: relative;
  flex: none;
  width: 38px;
  display: flex;
  flex-direction: column;
  border-left: 1px solid #c6c5c3;
}
.sidebar button {
  height: 29px;
  display: flex;
  align-items: center;
  justify-content: center;
}
.grip {
  position: absolute;
  left: -1px;
  top: 268px;
  width: 5px;
  height: 50px;
  background: #8f8f8f;
}
.status {
  flex: none;
  display: grid;
  grid-template-columns: 20px 154fr 218fr 177fr 252fr 31px 20px 20px 179fr 96px 33px;
  height: 16px;
  align-items: center;
  border-top: 1px solid #d2cfcb;
  font-size: 8px;
}
.field {
  box-sizing: border-box;
  height: 12px;
  padding-left: 7px;
  border-right: 1px solid #dddcda;
  white-space: nowrap;
}
.field.mid {
  display: flex;
  justify-content: center;
  padding-left: 0;
}
.field.plain {
  border-right: 0;
}
.field.zoomer {
  display: flex;
  align-items: center;
  gap: 3px;
  padding-right: 4px;
}
.zoomer input {
  appearance: none;
  flex: 1;
  min-width: 0;
  height: 12px;
}
.zoomer input::-webkit-slider-runnable-track {
  height: 1px;
  background: #999;
}
.zoomer input::-webkit-slider-thumb {
  appearance: none;
  box-sizing: border-box;
  width: 3px;
  height: 7px;
  margin-top: -3px;
  border: 1px solid #555;
  background: #fff;
}
</style>
